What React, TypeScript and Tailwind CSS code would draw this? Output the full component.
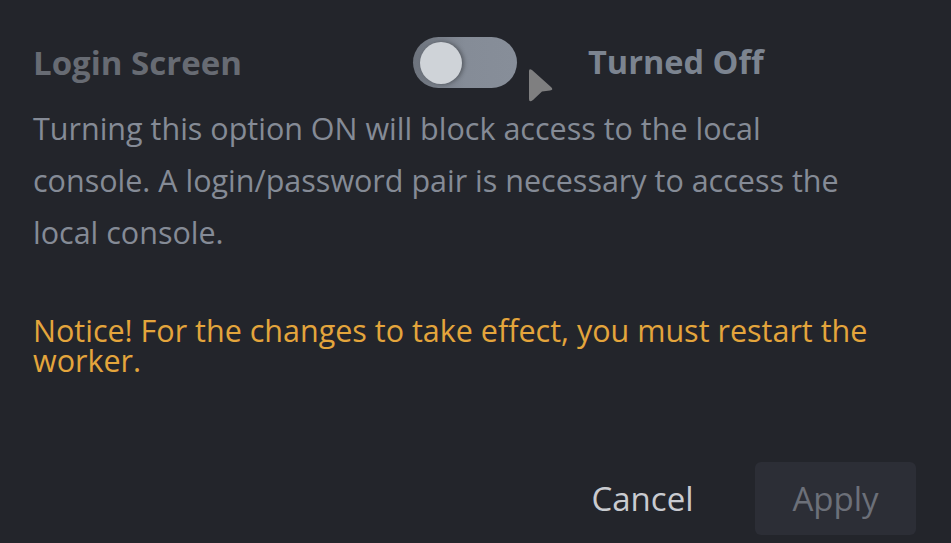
import React from "react";

const font = { fontFamily: '"Open Sans", "Noto Sans", sans-serif' };

function Toggle() {
  return (
    <div className="relative h-[51px] w-[104px] rounded-full bg-gradient-to-r from-[#6d737d] via-[#858c97] to-[#878e99]">
      <div className="absolute left-[7px] top-[5px] h-[42px] w-[42px] rounded-full bg-[#cfd3d8] shadow-[2px_0_4px_rgba(0,0,0,0.35)]" />
      <svg
        className="absolute left-[113px] top-[31px]"
        width="28"
        height="36"
        viewBox="0 0 28 36"
      >
        <path
          d="M3 3 Q3 0 6 2 L25 19 Q28 22 24 22.5 L16 23.5 L7 32 Q3 35 3 31 Z"
          fill="#7f7f80"
        />
      </svg>
    </div>
  );
}

export default function App() {
  return (
    <div
      className="flex h-[543px] w-[951px] flex-col bg-[#23252b] pl-[33px] pr-[35px]"
      style={font}
    >
      <div className="flex items-center pt-[37px]">
        <div className="w-[380px] text-[33px] font-bold text-[#676b73]">
          Login Screen
        </div>
        <Toggle />
        <div className="ml-[71px] text-[32.5px] font-bold text-[#7c8490]">
          Turned Off
        </div>
      </div>

      <p className="mt-[14px] max-w-[830px] text-[30.5px] leading-[52px] text-[#858b96]">
        Turning this option ON will block access to the local console. A
        login/password pair is necessary to access the local console.
      </p>

      <p className="mt-[57px] max-w-[875px] text-[30.5px] leading-[30px] text-[#e4a53c]">
        Notice! For the changes to take effect, you must restart the worker.
      </p>

      <div className="mt-auto flex justify-end gap-[32px] pb-[8px]">
        <button className="h-[73px] w-[161px] rounded-[6px] text-[33px] text-[#c9cbd0]">
          Cancel
        </button>
        <button className="h-[73px] w-[161px] rounded-[6px] bg-[#2c2e36] text-[33px] text-[#6c7079]">
          Apply
        </button>
      </div>
    </div>
  );
}
